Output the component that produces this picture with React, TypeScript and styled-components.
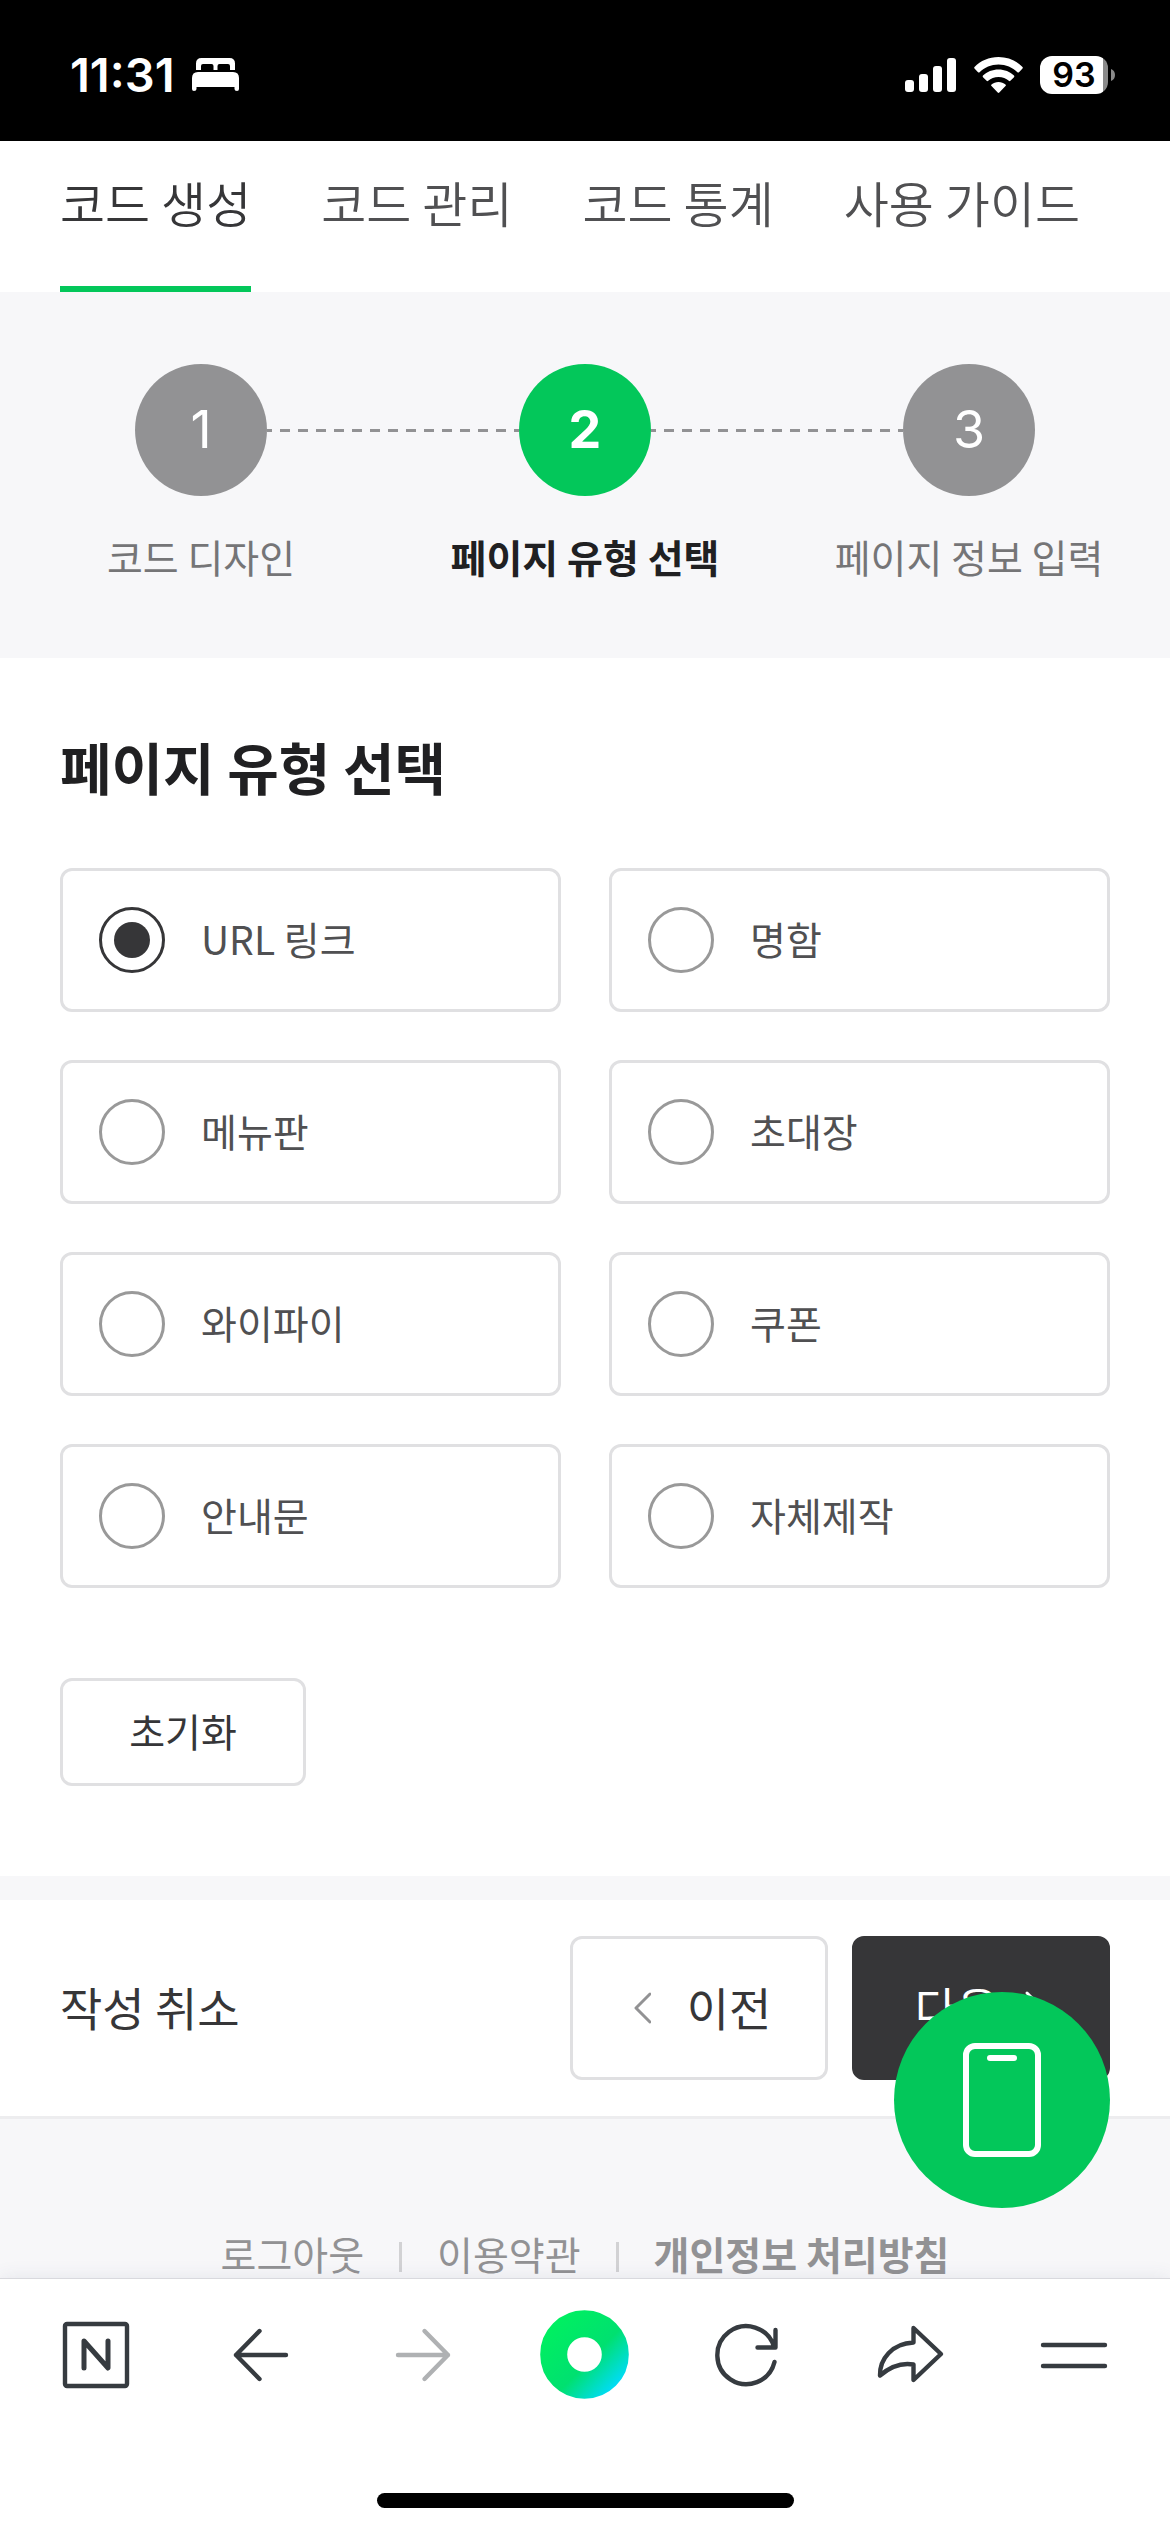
import React, { useState } from "react";
import styled, { createGlobalStyle, css } from "styled-components";

const color = {
  green: "#03c75a",
  ink: "#202022",
  dark: "#363638",
  text: "#505052",
  muted: "#757577",
  gray: "#929294",
  line: "#e0e0e2",
  surface: "#f7f7f9",
  icon: "#363b40",
};

const GlobalStyle = createGlobalStyle`
  *, *::before, *::after { box-sizing: border-box; }
  body {
    margin: 0;
    background: #fff;
    color: ${color.dark};
    font-family: "Noto Sans CJK KR", sans-serif;
    font-size: 39px;
  }
  button { font-family: inherit; cursor: pointer; }
  a { color: inherit; text-decoration: none; }
`;

const Page = styled.div`
  display: flex;
  flex-direction: column;
  min-height: 100vh;
`;

/* Status bar */

const StatusBar = styled.header`
  display: flex;
  align-items: center;
  justify-content: space-between;
  height: 141px;
  padding: 8px 55px 0 70px;
  background: #000;
  color: #fff;
  font-family: Inter, sans-serif;
`;

const StatusGroup = styled.div`
  display: flex;
  align-items: center;
  gap: 17px;
`;

const Clock = styled.time`
  font-size: 47px;
  font-weight: 600;
  line-height: 56px;
`;

const Battery = styled.div`
  display: flex;
  align-items: center;
  gap: 3px;
`;

const BatteryLevel = styled.span`
  width: 68px;
  border-radius: 12px;
  background: linear-gradient(to right, #fff 93%, #8a8a8a 93%);
  color: #000;
  font-size: 34px;
  font-weight: 600;
  line-height: 38px;
  text-align: center;
`;

/* Tabs */

const Tabs = styled.nav`
  display: flex;
  gap: 70px;
  padding: 0 60px;
`;

const Tab = styled.a<{ $active?: boolean }>`
  height: 151px;
  padding-top: 25px;
  border-bottom: 6px solid ${(p) => (p.$active ? color.green : "transparent")};
  color: ${(p) => (p.$active ? color.dark : color.text)};
  font-size: 49px;
  font-weight: 350;
  line-height: 72px;
  white-space: nowrap;
`;

/* Steps */

const Steps = styled.ol`
  display: grid;
  grid-template-columns: repeat(3, 1fr);
  margin: 0;
  padding: 72px 9px 75px;
  background: ${color.surface};
  list-style: none;
`;

const Step = styled.li<{ $active?: boolean }>`
  display: flex;
  flex-direction: column;
  gap: 33px;
  color: ${(p) => (p.$active ? color.ink : color.muted)};
  font-weight: ${(p) => (p.$active ? 700 : 400)};
  line-height: 54px;
  text-align: center;
  white-space: nowrap;
`;

const StepTrack = styled.div`
  display: flex;
  align-items: center;
`;

const Connector = styled.span<{ $hidden?: boolean }>`
  flex: 1;
  height: 3px;
  visibility: ${(p) => (p.$hidden ? "hidden" : "visible")};
  background: linear-gradient(to right, ${color.gray} 10px, transparent 10px) 13px 0 / 18px 3px;
`;

const StepNumber = styled.span<{ $active?: boolean }>`
  width: 132px;
  border-radius: 50%;
  background: ${(p) => (p.$active ? color.green : color.gray)};
  color: #fff;
  font-family: Inter, sans-serif;
  font-size: 52px;
  font-weight: ${(p) => (p.$active ? 700 : 400)};
  line-height: 132px;
`;

/* Form */

const Section = styled.section`
  padding: 69px 60px 90px;
`;

const Title = styled.h1`
  margin: 0 0 63px;
  color: ${color.ink};
  font-size: 56px;
  font-weight: 700;
  line-height: 78px;
`;

const Options = styled.div`
  display: grid;
  grid-template-columns: repeat(2, 1fr);
  gap: 48px;
  margin-bottom: 90px;
`;

const box = css`
  border: 3px solid ${color.line};
  border-radius: 12px;
  background: #fff;
`;

/* Hangul sits low in its line box; the bottom padding centres it optically. */
const Caption = styled.span`
  padding-bottom: 5px;
`;

const Option = styled.label`
  ${box}
  display: flex;
  align-items: center;
  gap: 36px;
  height: 144px;
  padding: 0 36px;
  color: ${color.text};
  cursor: pointer;
`;

const Radio = styled.input`
  appearance: none;
  display: grid;
  place-items: center;
  width: 66px;
  height: 66px;
  margin: 0;
  border: 3px solid #999;
  border-radius: 50%;

  &:checked {
    border-color: ${color.dark};
  }

  &:checked::before {
    content: "";
    width: 36px;
    height: 36px;
    border-radius: 50%;
    background: ${color.dark};
  }
`;

const ResetButton = styled.button`
  ${box}
  display: flex;
  align-items: center;
  justify-content: center;
  width: 246px;
  height: 108px;
  padding: 0;
  color: ${color.dark};
  font-size: 39px;
`;

const Actions = styled.div`
  display: flex;
  align-items: center;
  gap: 24px;
  padding: 36px 60px;
  border-top: 24px solid ${color.surface};
  border-bottom: 3px solid #ededef;
`;

const CancelButton = styled.button`
  display: flex;
  margin-right: auto;
  padding: 0;
  border: 0;
  background: none;
  color: ${color.dark};
  font-size: 46px;
`;

const MoveButton = styled.button<{ $primary?: boolean }>`
  ${box}
  display: flex;
  align-items: center;
  justify-content: center;
  gap: ${(p) => (p.$primary ? 24 : 36)}px;
  width: 258px;
  height: 144px;
  padding: 0;
  color: ${color.dark};
  font-size: 46px;
  ${(p) =>
    p.$primary &&
    css`
      border-color: ${color.dark};
      background: ${color.dark};
      color: #fff;
    `}
`;

/* Footer */

const Footer = styled.footer`
  flex: 1;
  display: flex;
  align-items: flex-start;
  justify-content: center;
  gap: 35px;
  padding-top: 112px;
  background: ${color.surface};
  color: ${color.gray};
  line-height: 44px;
`;

const FooterLink = styled.a<{ $strong?: boolean }>`
  font-weight: ${(p) => (p.$strong ? 700 : 400)};
`;

const Divider = styled.span`
  align-self: flex-start;
  width: 3px;
  height: 30px;
  margin-top: 11px;
  background: #d2d2d4;
`;

const PreviewButton = styled.button`
  position: fixed;
  right: 60px;
  bottom: 324px;
  display: grid;
  place-items: center;
  width: 216px;
  height: 216px;
  padding: 0;
  border: 0;
  border-radius: 50%;
  background: ${color.green};
`;

/* Browser toolbar */

const Toolbar = styled.nav`
  position: sticky;
  bottom: 0;
  display: flex;
  flex-direction: column;
  align-items: center;
  padding-bottom: 24px;
  border-top: 1px solid #d9d9de;
  background: #fff;
  box-shadow: 0 0 18px rgba(60, 70, 110, 0.1);
`;

const ToolbarRow = styled.div`
  display: grid;
  grid-template-columns: repeat(7, 1fr);
  align-self: stretch;
  padding: 31px 15px 94px;
`;

const ToolButton = styled.button`
  display: grid;
  place-items: center;
  height: 89px;
  padding: 0;
  border: 0;
  background: none;
  color: ${color.icon};

  &:disabled {
    color: #afb1b3;
  }
`;

const HomeIndicator = styled.div`
  width: 417px;
  height: 15px;
  border-radius: 8px;
  background: #000;
`;

const ToolIcon = ({ children }: { children: React.ReactNode }) => (
  <svg
    width="72"
    height="72"
    viewBox="0 0 72 72"
    fill="none"
    stroke="currentColor"
    strokeWidth="4.4"
    strokeLinecap="round"
    strokeLinejoin="round"
    aria-hidden="true"
  >
    {children}
  </svg>
);

const BedIcon = () => (
  <svg width="47" height="33" viewBox="0 0 47 33" fill="#fff" aria-hidden="true">
    <path d="M4 12V5.500Q4 0 9.500 0H37.500Q43 0 43 5.500V12H38V8Q38 6 36 6H27.500Q25.500 6 25.500 8V12H21.500V8Q21.500 6 19.500 6H11Q9 6 9 8V12Z" />
    <path d="M0 20Q0 14 6 14H41Q47 14 47 20V31Q47 33 45 33Q42.500 33 42.500 31V29H4.500V31Q4.500 33 2 33Q0 33 0 31Z" />
  </svg>
);

const SignalIcon = () => (
  <svg width="52" height="34" viewBox="0 0 52 34" fill="#fff" aria-hidden="true">
    <rect x="0" y="22" width="9" height="12" rx="3" />
    <rect x="14" y="16" width="9" height="18" rx="3" />
    <rect x="28" y="8" width="9" height="26" rx="3" />
    <rect x="42" y="0" width="9" height="34" rx="3" />
  </svg>
);

const WifiIcon = () => (
  <svg width="49" height="36" viewBox="0 0 49 36" fill="#fff" aria-hidden="true">
    <path d="M24.500 0C34 0 42.500 3.700 48.500 10Q49.200 10.800 48.500 11.500L45 15.200Q44.200 16 43.400 15.200C38.500 10.500 32 7.600 24.500 7.600S10.500 10.500 5.600 15.200Q4.800 16 4 15.200L.5 11.500Q-.2 10.800 .5 10C6.500 3.700 15 0 24.500 0Z" />
    <path d="M24.500 12.500C30.500 12.500 36 14.800 40 18.600Q40.800 19.400 40 20.200L36.400 23.800Q35.600 24.500 34.800 23.800C32.200 21.500 28.600 20 24.500 20S16.800 21.500 14.200 23.800Q13.400 24.500 12.600 23.800L9 20.200Q8.200 19.400 9 18.600C13 14.800 18.500 12.500 24.500 12.500Z" />
    <path d="M24.500 25C27.200 25 29.600 26 31.500 27.500Q32.300 28.300 31.500 29.100L25.300 35.500Q24.500 36.300 23.700 35.500L17.500 29.100Q16.700 28.300 17.500 27.500C19.400 26 21.800 25 24.500 25Z" />
  </svg>
);

const BatteryTip = () => (
  <svg width="4" height="12" viewBox="0 0 4 12" fill="#8a8a8a" aria-hidden="true">
    <path d="M0 0Q4 1.500 4 6T0 12Z" />
  </svg>
);

const Chevron = ({ direction }: { direction: "left" | "right" }) => (
  <svg width="24" height="36" viewBox="0 0 24 36" fill="none" strokeWidth="3" strokeLinecap="round" strokeLinejoin="round" aria-hidden="true">
    {direction === "left" ? (
      <path d="M23 4L9 18L23 32" stroke={color.gray} />
    ) : (
      <path d="M4 3L19 18L4 33" stroke="#fff" />
    )}
  </svg>
);

const PhoneIcon = () => (
  <svg width="78" height="114" viewBox="0 0 78 114" fill="none" stroke="#fff" strokeWidth="6" aria-hidden="true">
    <rect x="3" y="3" width="72" height="108" rx="9" />
    <path d="M27 15H51" strokeLinecap="round" />
  </svg>
);

const HomeIcon = () => (
  <svg width="89" height="89" viewBox="0 0 89 89" fill="none" aria-hidden="true">
    <defs>
      <linearGradient id="home-ring" x1="14" y1="10" x2="78" y2="72" gradientUnits="userSpaceOnUse">
        <stop offset="0" stopColor="#00f060" />
        <stop offset="0.6" stopColor="#00e070" />
        <stop offset="1" stopColor="#00dcf2" />
      </linearGradient>
    </defs>
    <circle cx="44.500" cy="44.500" r="30.800" stroke="url(#home-ring)" strokeWidth="27" />
  </svg>
);

const tabs = ["코드 생성", "코드 관리", "코드 통계", "사용 가이드"];
const steps = ["코드 디자인", "페이지 유형 선택", "페이지 정보 입력"];
const pageTypes = ["URL 링크", "명함", "메뉴판", "초대장", "와이파이", "쿠폰", "안내문", "자체제작"];

export default function App() {
  const [pageType, setPageType] = useState(pageTypes[0]);
  const currentStep = 1;

  return (
    <Page>
      <GlobalStyle />
      <StatusBar>
        <StatusGroup>
          <Clock>11:31</Clock>
          <BedIcon />
        </StatusGroup>
        <StatusGroup>
          <SignalIcon />
          <WifiIcon />
          <Battery>
            <BatteryLevel>93</BatteryLevel>
            <BatteryTip />
          </Battery>
        </StatusGroup>
      </StatusBar>

      <Tabs>
        {tabs.map((tab, i) => (
          <Tab key={tab} href="#" $active={i === 0}>
            {tab}
          </Tab>
        ))}
      </Tabs>

      <Steps>
        {steps.map((step, i) => (
          <Step key={step} $active={i === currentStep}>
            <StepTrack>
              <Connector $hidden={i === 0} />
              <StepNumber $active={i === currentStep}>{i + 1}</StepNumber>
              <Connector $hidden={i === steps.length - 1} />
            </StepTrack>
            {step}
          </Step>
        ))}
      </Steps>

      <main>
        <Section>
          <Title>페이지 유형 선택</Title>
          <Options role="radiogroup" aria-label="페이지 유형 선택">
            {pageTypes.map((type) => (
              <Option key={type}>
                <Radio
                  type="radio"
                  name="pageType"
                  value={type}
                  checked={pageType === type}
                  onChange={() => setPageType(type)}
                />
                <Caption>{type}</Caption>
              </Option>
            ))}
          </Options>
          <ResetButton type="button" onClick={() => setPageType(pageTypes[0])}>
            <Caption>초기화</Caption>
          </ResetButton>
        </Section>
        <Actions>
          <CancelButton type="button">
            <Caption>작성 취소</Caption>
          </CancelButton>
          <MoveButton type="button">
            <Chevron direction="left" />
            <Caption>이전</Caption>
          </MoveButton>
          <MoveButton type="button" $primary>
            <Caption>다음</Caption>
            <Chevron direction="right" />
          </MoveButton>
        </Actions>
      </main>

      <Footer>
        <FooterLink href="#">로그아웃</FooterLink>
        <Divider />
        <FooterLink href="#">이용약관</FooterLink>
        <Divider />
        <FooterLink href="#" $strong>
          개인정보 처리방침
        </FooterLink>
      </Footer>

      <PreviewButton type="button" aria-label="미리보기">
        <PhoneIcon />
      </PreviewButton>

      <Toolbar>
        <ToolbarRow>
          <ToolButton type="button" aria-label="네이버 홈">
            <ToolIcon>
              <rect x="5" y="5" width="62" height="62" rx="2" />
              <path d="M24 49V22L48 49V22" strokeWidth="5" />
            </ToolIcon>
          </ToolButton>
          <ToolButton type="button" aria-label="뒤로">
            <ToolIcon>
              <path d="M63 36H13M36.500 12L13 36L36.500 60" />
            </ToolIcon>
          </ToolButton>
          <ToolButton type="button" aria-label="앞으로" disabled>
            <ToolIcon>
              <path d="M12 36H62M38.500 12L62 36L38.500 60" />
            </ToolIcon>
          </ToolButton>
          <ToolButton type="button" aria-label="그린닷">
            <HomeIcon />
          </ToolButton>
          <ToolButton type="button" aria-label="새로고침">
            <ToolIcon>
              <path d="M62 27.500A29 29 0 1 0 62.500 43M63.500 11V28.500H45.500" />
            </ToolIcon>
          </ToolButton>
          <ToolButton type="button" aria-label="공유">
            <ToolIcon>
              <path d="M38.500 9L66 35L38.500 61V45.500C27 43.500 16 47 5 56.500C4.500 40 17 24.500 38.500 23.500Z" />
            </ToolIcon>
          </ToolButton>
          <ToolButton type="button" aria-label="메뉴">
            <ToolIcon>
              <path d="M5 26H67M5 47H67" />
            </ToolIcon>
          </ToolButton>
        </ToolbarRow>
        <HomeIndicator />
      </Toolbar>
    </Page>
  );
}
